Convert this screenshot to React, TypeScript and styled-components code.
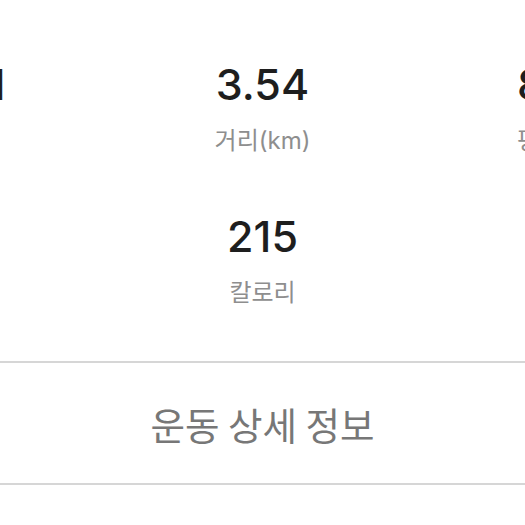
import React from "react";
import styled, { createGlobalStyle } from "styled-components";

interface Stat {
  value: string;
  label: string;
}

const firstRow: Stat[] = [
  { value: "30:21", label: "시간" },
  { value: "3.54", label: "거리(km)" },
  { value: "8'34\"", label: "평균 페이스" },
];

const secondRow: (Stat | null)[] = [null, { value: "215", label: "칼로리" }, null];

const GlobalStyle = createGlobalStyle`
  html, body {
    margin: 0;
    padding: 0;
    background: #ffffff;
  }
  body {
    font-family: Inter, "Noto Sans CJK KR", sans-serif;
    -webkit-font-smoothing: antialiased;
  }
`;

const Page = styled.div`
  width: 100%;
  height: 525px;
  overflow: hidden;
  background: #ffffff;
  display: flex;
  flex-direction: column;
`;

const StatsViewport = styled.div`
  display: flex;
  justify-content: center;
  overflow: hidden;
  padding-top: 58px;
`;

const StatsGrid = styled.div`
  flex: 0 0 939px;
  display: grid;
  grid-template-columns: repeat(3, 313px);
  row-gap: 52px;
`;

const Cell = styled.div`
  display: flex;
  flex-direction: column;
  align-items: center;
  white-space: nowrap;
`;

const Value = styled.div`
  font-family: Inter, sans-serif;
  font-weight: 500;
  font-size: 43px;
  line-height: 52px;
  color: #1e1e1e;
`;

const Label = styled.div`
  margin-top: 14px;
  font-family: Inter, "Noto Sans CJK KR", sans-serif;
  font-weight: 400;
  font-size: 24px;
  line-height: 34px;
  color: #8e8e8e;
`;

const DetailButton = styled.button`
  margin-top: 51px;
  height: 124px;
  width: 100%;
  border: none;
  border-top: 2px solid #d6d6d6;
  border-bottom: 2px solid #d6d6d6;
  background: #ffffff;
  font-family: "Noto Sans CJK KR", sans-serif;
  font-size: 37.5px;
  font-weight: 400;
  color: #777777;
  cursor: pointer;
  padding: 0;
`;

const StatCell = ({ stat }: { stat: Stat | null }) => (
  <Cell>
    {stat && (
      <>
        <Value>{stat.value}</Value>
        <Label>{stat.label}</Label>
      </>
    )}
  </Cell>
);

export default function App() {
  return (
    <Page>
      <GlobalStyle />
      <StatsViewport>
        <StatsGrid>
          {firstRow.map((s, i) => (
            <StatCell key={"a" + i} stat={s} />
          ))}
          {secondRow.map((s, i) => (
            <StatCell key={"b" + i} stat={s} />
          ))}
        </StatsGrid>
      </StatsViewport>
      <DetailButton>운동 상세 정보</DetailButton>
    </Page>
  );
}
